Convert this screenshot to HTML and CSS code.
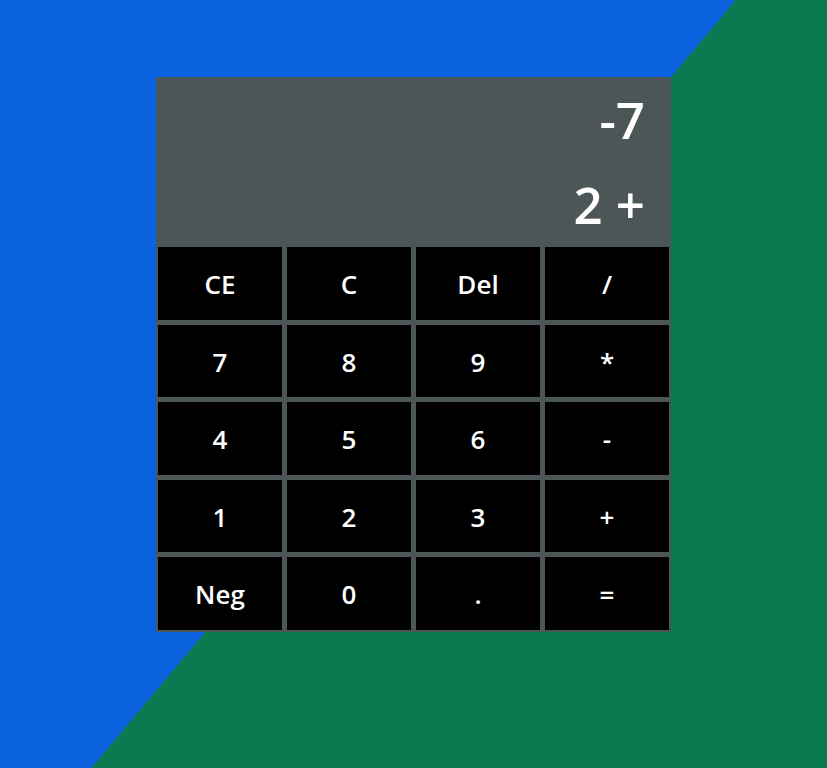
FILE: index.html
```html
<!DOCTYPE html>
<html lang="en">
<head>
<meta charset="utf-8">
<title>Calculator</title>
<link rel="stylesheet" href="styles.css">
</head>
<body>
<div class="calculator">
  <div class="output">
    <div class="previous-operand">-7</div>
    <div class="current-operand">2 +</div>
  </div>
  <div class="keys">
    <button class="key">CE</button>
    <button class="key">C</button>
    <button class="key">Del</button>
    <button class="key">/</button>
    <button class="key">7</button>
    <button class="key">8</button>
    <button class="key">9</button>
    <button class="key">*</button>
    <button class="key">4</button>
    <button class="key">5</button>
    <button class="key">6</button>
    <button class="key">-</button>
    <button class="key">1</button>
    <button class="key">2</button>
    <button class="key">3</button>
    <button class="key">+</button>
    <button class="key">Neg</button>
    <button class="key">0</button>
    <button class="key">.</button>
    <button class="key">=</button>
  </div>
</div>
</body>
</html>
```
FILE: styles.css
```css
* {
  box-sizing: border-box;
}

html, body {
  margin: 0;
  padding: 0;
}

body {
  min-height: 100vh;
  background: linear-gradient(130deg, #0b62df 50%, #0b7a50 50%);
  font-family: "Open Sans", "Liberation Sans", sans-serif;
  padding-top: 77px;
}

.calculator {
  width: 515px;
  margin: 0 auto;
  background: #4d5656;
  padding: 0 2px 2.5px;
}

.output {
  height: 170px;
  display: flex;
  flex-direction: column;
  align-items: flex-end;
  justify-content: space-around;
  padding-right: 24px;
  color: #fff;
  font-size: 51px;
  font-weight: 600;
  line-height: 1.362;
}

.keys {
  display: grid;
  grid-template-columns: repeat(4, 124px);
  grid-template-rows: repeat(5, 72.5px);
  gap: 5px;
}

.key {
  background: #000;
  color: #fff;
  border: none;
  margin: 0;
  padding: 2px 0 0;
  font-family: "Open Sans", "Liberation Sans", sans-serif;
  font-size: 26px;
  font-weight: 600;
  cursor: pointer;
}
```
